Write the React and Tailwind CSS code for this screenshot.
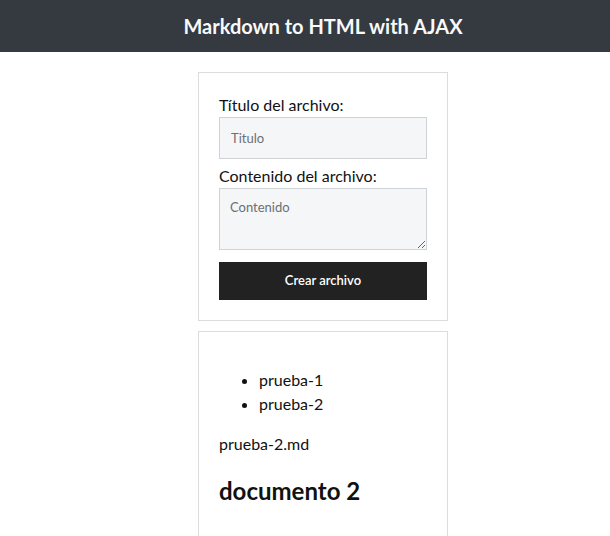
export default function App() {
  return (
    <div className="min-h-screen bg-white font-['Lato','Noto_Sans',sans-serif] text-[#111]">
      {/* Header */}
      <header className="h-[52px] bg-[#343a40] flex items-center justify-center pl-[36px]">
        <h1 className="text-[20px] font-bold text-[#f8f9fa]">
          Markdown to HTML with AJAX
        </h1>
      </header>

      <main className="flex flex-col items-center pl-[36px]">
        {/* Form card */}
        <div className="mt-5 w-[250px] border border-[#dcdcdc] p-5">
          <label className="block text-base leading-6">Título del archivo:</label>
          <input
            type="text"
            placeholder="Titulo"
            className="block w-full h-[42px] border border-[#cfd2d6] bg-[#f5f6f8] px-[11px] text-[13px] placeholder:text-[#6c6f73] focus:outline-none"
          />
          <label className="block mt-[5px] text-base leading-6">
            Contenido del archivo:
          </label>
          <textarea
            placeholder="Contenido"
            className="block w-full h-[62px] border border-[#cfd2d6] bg-[#f5f6f8] px-[10px] pt-[10px] text-[13px] leading-4 placeholder:text-[#6c6f73] focus:outline-none"
          />
          <button
            type="button"
            className="mt-3 w-full h-[38px] bg-[#222] text-white text-[13px] font-semibold"
          >
            Crear archivo
          </button>
        </div>

        {/* Result card */}
        <div className="mt-[10px] w-[250px] border border-[#dcdcdc] px-5 pt-5 pb-10">
          <ul className="list-disc pl-10 my-4 text-base leading-6">
            <li>prueba-1</li>
            <li>prueba-2</li>
          </ul>
          <p className="text-base leading-6">prueba-2.md</p>
          <h2 className="mt-5 text-2xl font-bold leading-[29px]">documento 2</h2>
        </div>
      </main>
    </div>
  );
}
